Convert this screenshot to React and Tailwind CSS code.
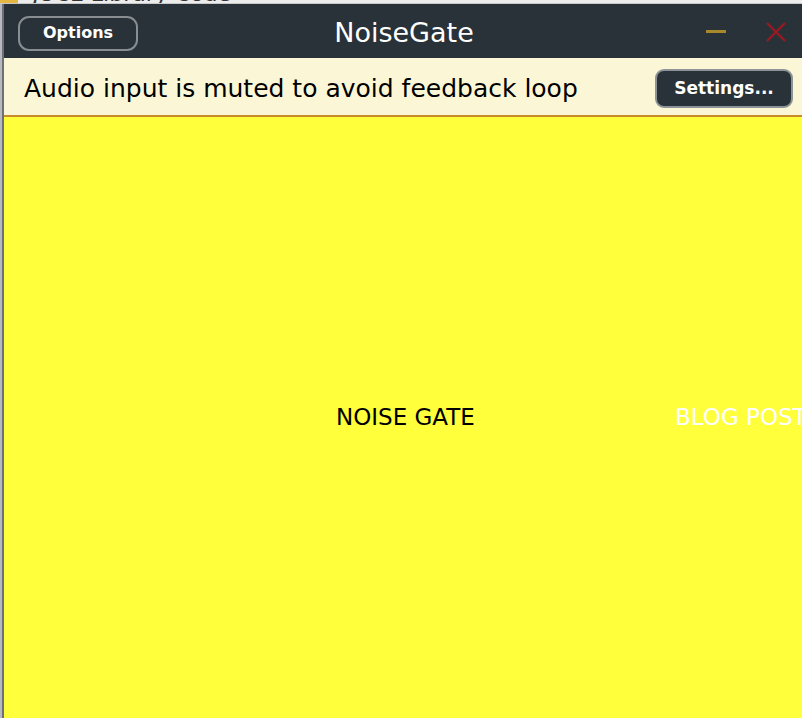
import React from "react";

export default function App() {
  const font = { fontFamily: '"DejaVu Sans", Verdana, sans-serif' };
  return (
    <div className="w-[802px] h-[718px] overflow-hidden bg-[#ececec] flex flex-col" style={font}>
      {/* background window strip */}
      <div className="h-[4px] shrink-0 overflow-hidden relative flex bg-[#ececec] border-b border-[#c8c8c8]">
        <div className="w-[18px] bg-[#e6b642] shrink-0" />
        <div className="-mt-[17px] ml-[14px] text-[22px] leading-[22px] text-[#333] whitespace-nowrap">JUCE Library Code</div>
      </div>
      <div className="flex flex-1 min-h-0">
        {/* left strip */}
        <div className="w-[4px] shrink-0 flex">
          <div className="w-[2px] bg-[#b7b9be]" />
          <div className="w-[2px] bg-[#6d7078]" />
        </div>
        {/* window */}
        <div className="flex-1 flex flex-col min-w-0">
          {/* title bar */}
          <div className="h-[54px] shrink-0 bg-[#283238] flex items-center relative pt-[4px]">
            <button className="ml-[14px] w-[120px] h-[35px] rounded-[11px] border-2 border-[#878d91] text-white text-[16px] font-bold leading-none flex items-center justify-center">
              Options
            </button>
            <div className="absolute left-0 right-0 top-0 h-[54px] pt-[3px] flex items-center justify-center pointer-events-none">
              <span className="text-white text-[27px] leading-none pl-[2px]">NoiseGate</span>
            </div>
            <div className="ml-auto flex items-center mr-[16px] gap-[40px] -mt-[3px]">
              <div className="w-[20px] h-[3px] bg-[#a8892a]" />
              <svg width="20" height="20" viewBox="0 0 20 20">
                <path d="M1 1 L19 19 M19 1 L1 19" stroke="#9a1a24" strokeWidth="2.4" />
              </svg>
            </div>
          </div>
          {/* notification bar */}
          <div className="h-[59px] shrink-0 bg-[#fbf7d6] border-b-2 border-[#c98c2a] flex items-center pt-[4px]">
            <span className="ml-[20px] text-black text-[25px] leading-none">Audio input is muted to avoid feedback loop</span>
            <button className="ml-auto mr-[9px] w-[138px] h-[39px] rounded-[9px] bg-[#283238] border-2 border-[#8d9397] text-white text-[17px] font-bold leading-none flex items-center justify-center">
              Settings...
            </button>
          </div>
          {/* main */}
          <div className="flex-1 bg-[#ffff3b] flex items-center relative">
            <span className="absolute left-[332px] top-[289px] text-black text-[23px] leading-none">NOISE GATE</span>
            <span className="absolute left-[671px] top-[289px] text-white text-[23px] leading-none whitespace-nowrap">BLOG POST</span>
          </div>
        </div>
      </div>
    </div>
  );
}
